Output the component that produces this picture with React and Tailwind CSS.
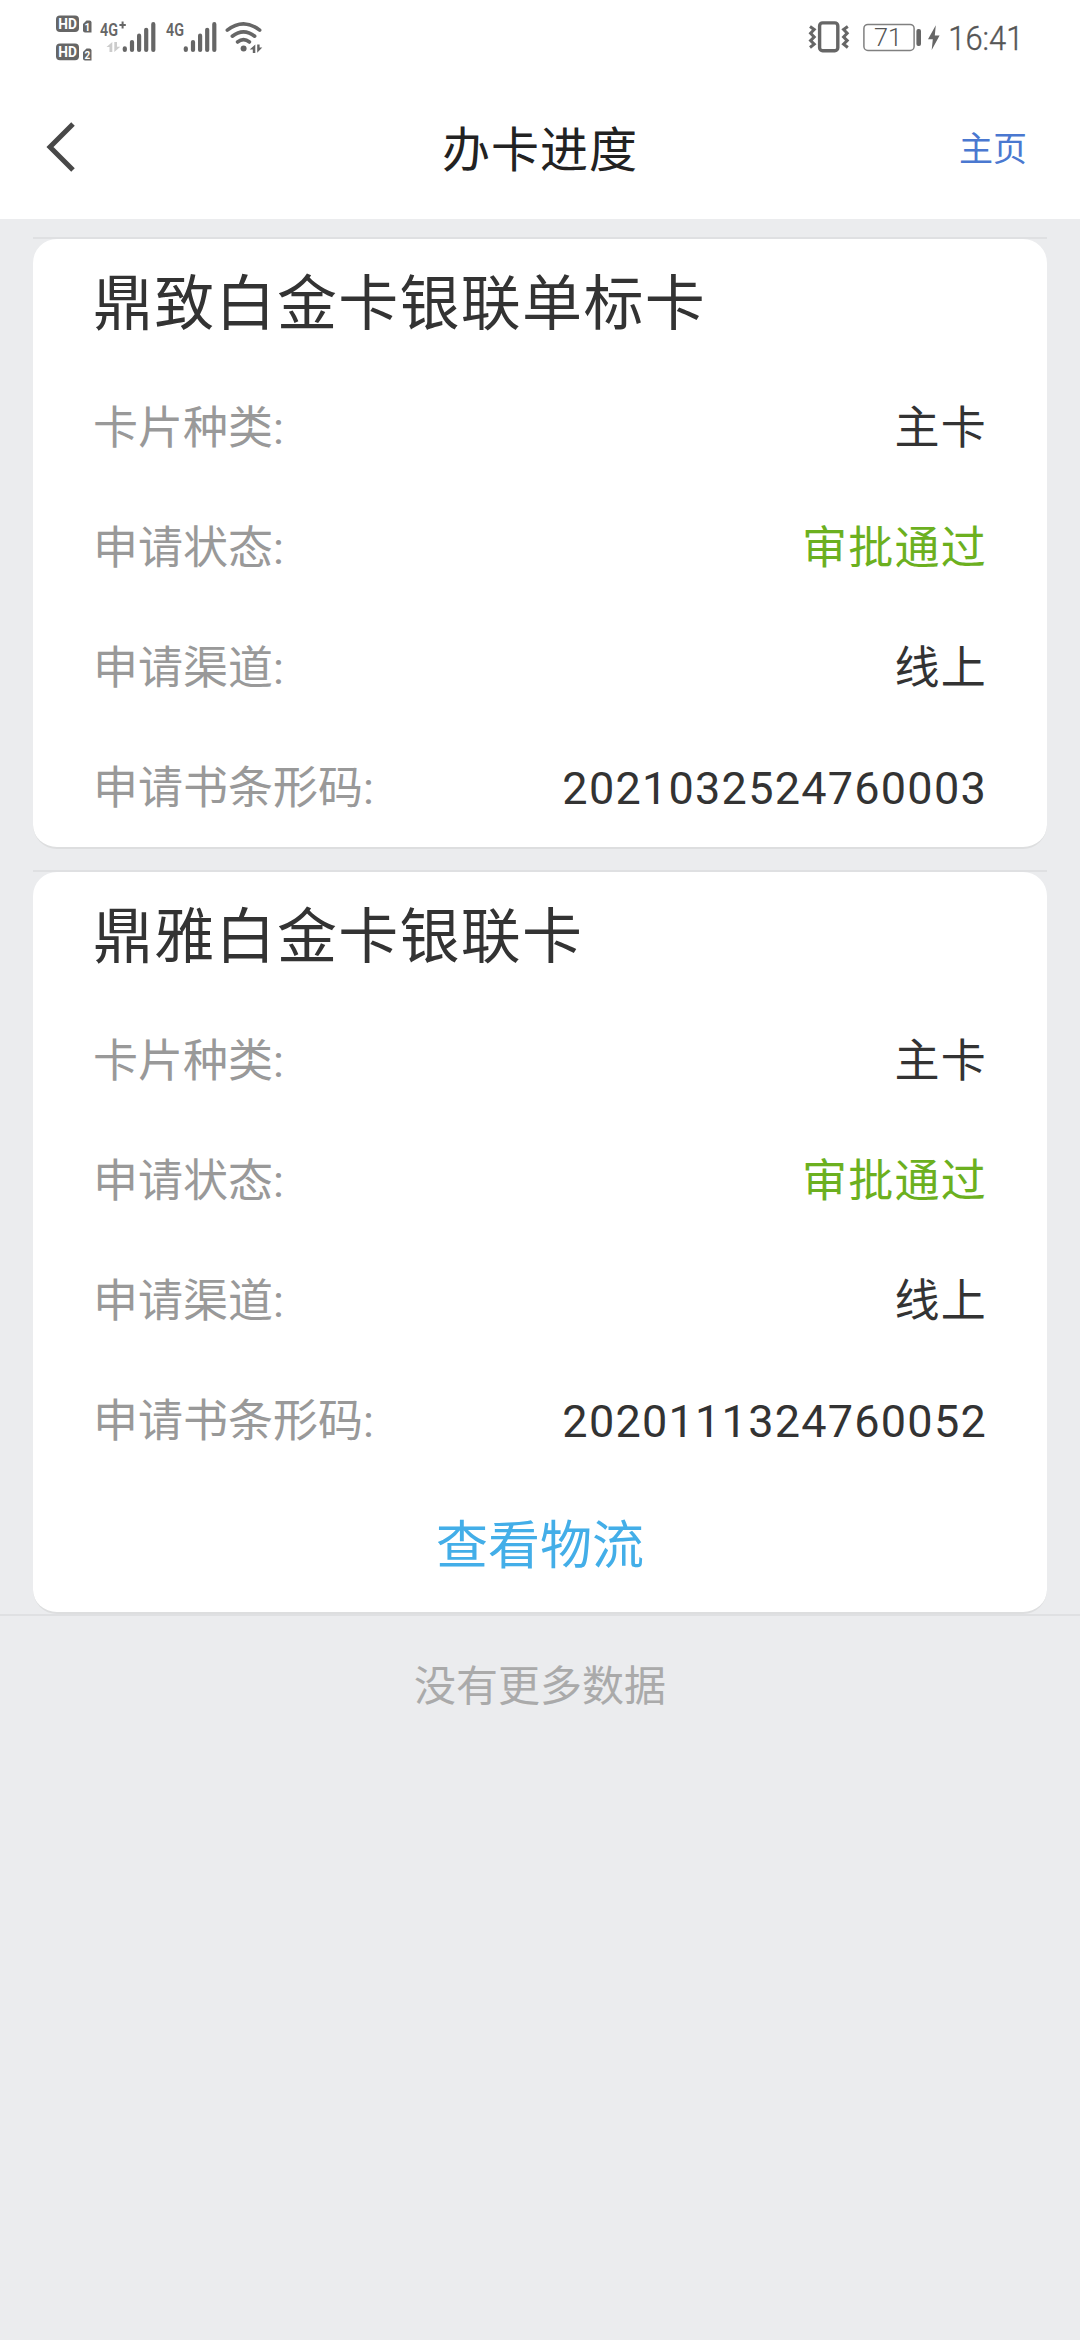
import React from 'react';

const cards = [
  {
    title: '鼎致白金卡银联单标卡',
    type: '主卡',
    status: '审批通过',
    channel: '线上',
    barcode: '2021032524760003',
  },
  {
    title: '鼎雅白金卡银联卡',
    type: '主卡',
    status: '审批通过',
    channel: '线上',
    barcode: '2020111324760052',
    tracking: true,
  },
];

const HdBadge = ({ y, sim }) => (
  <g transform={`translate(0 ${y})`}>
    <rect x="56" y="0" width="23" height="16.6" rx="4" fill="#666" />
    <text x="58.3" y="13.6" fontSize="15" fontWeight="700" fill="#fff" textLength="18.6" lengthAdjust="spacingAndGlyphs">HD</text>
    <path d="M83 8.5L86.5 5H89.5Q91.5 5 91.5 7V17H85Q83 17 83 15Z" fill="#666" />
    <text x="84.6" y="15" fontSize="10" fontWeight="700" fill="#fff">{sim}</text>
  </g>
);

const SignalBars = ({ x }) => (
  <g stroke="#666" strokeWidth="4.2" strokeLinecap="round">
    <path d={`M${x} 48.3V49.9 M${x + 7.2} 42V49.9 M${x + 14.3} 35.7V49.9 M${x + 21.4} 29.8V49.9 M${x + 28.5} 24.2V49.9`} />
  </g>
);

const StatusLeft = () => (
  <svg width="280" height="76" viewBox="0 0 280 76" fontFamily="Roboto, sans-serif">
    <HdBadge y={15.5} sim="1" />
    <HdBadge y={43.6} sim="2" />
    <text x="100" y="35.5" fontSize="18.5" fontWeight="600" fill="#666" textLength="18" lengthAdjust="spacingAndGlyphs">4G</text>
    <path d="M119.4 25H125.8 M122.6 21.6V28.4" stroke="#666" strokeWidth="2" />
    <path d="M106.5 47L112.3 42V52H109.5V47Z M114.3 42H117V46.8H120.3L114.3 52Z" fill="#ccc" />
    <SignalBars x={124.8} />
    <text x="166" y="35.5" fontSize="18.5" fontWeight="600" fill="#666" textLength="18" lengthAdjust="spacingAndGlyphs">4G</text>
    <SignalBars x={185.8} />
    <g fill="none" stroke="#666" strokeWidth="3.6" strokeLinecap="round">
      <path d="M227.3 30.2Q243.5 17.6 259.7 30.2" />
      <path d="M232.3 36.2Q243.5 27.6 254.7 36.2" />
      <path d="M237.5 42Q243.5 37.4 249.5 42" />
    </g>
    <circle cx="243.6" cy="48.6" r="3" fill="#666" />
    <path d="M249.7 49.4L255.3 44.4V53H252.8V49.4Z M257.2 44.4H259.6V47.4H262.3L257.2 52.8Z" fill="#666" />
  </svg>
);

const StatusRight = () => (
  <svg width="226" height="76" viewBox="804 0 226 76" fontFamily="Roboto, sans-serif">
    <g fill="none" stroke="#666">
      <rect x="819.6" y="22.9" width="18.2" height="27.8" rx="3" strokeWidth="3.4" />
      <path d="M810 26.5L814.2 29.5L810.6 33.3L814.2 37L810.6 40.6L814.2 44.2L810 47.5" strokeWidth="3" />
      <path d="M847.8 26.5L843.6 29.5L847.2 33.3L843.6 37L847.2 40.6L843.6 44.2L847.8 47.5" strokeWidth="3" />
      <rect x="863.9" y="24.4" width="50.2" height="26" rx="4" stroke="#808080" strokeWidth="1.5" />
    </g>
    <rect x="916.4" y="29" width="4.6" height="17" rx="2" fill="#666" />
    <text x="874" y="46.2" fontSize="26.5" fontWeight="300" fill="#555" textLength="28" lengthAdjust="spacingAndGlyphs">71</text>
    <path d="M935.8 25.3L928 39.2H932.8L931.7 50L939.6 35.6H934.8Z" fill="#666" />
    <text x="948.3" y="50" fontSize="33.5" fontWeight="300" fill="#555" stroke="#555" strokeWidth="0.4" textLength="75" lengthAdjust="spacingAndGlyphs">16:41</text>
  </svg>
);

const Row = ({ label, value, valueClass = 'text-[#333]' }) => (
  <div className="flex h-[120px] items-center justify-between text-[45px]">
    <span className="text-[#999]">{label}:</span>
    <span className={`tracking-[1.25px] ${valueClass}`}>{value}</span>
  </div>
);

const Card = ({ card }) => (
  <div>
    <div className="h-[2px] bg-[#dfe0e2]" />
    <div className="rounded-[24px] border-b-2 border-[#dddedf] bg-white px-[60px]">
      <h2 className="h-[130px] pt-px text-[60px] leading-[130px] tracking-[1.3px] text-[#333]">{card.title}</h2>
      <Row label="卡片种类" value={card.type} />
      <Row label="申请状态" value={card.status} valueClass="text-[#6cb01f]" />
      <Row label="申请渠道" value={card.channel} />
      <Row label="申请书条形码" value={card.barcode} />
      {card.tracking ? (
        <button className="block h-[130px] w-full text-center text-[52px] text-[#43aee8]">查看物流</button>
      ) : (
        <div className="-mt-[2px]" />
      )}
    </div>
  </div>
);

const App = () => {
  return (
    <div className="h-[2340px] w-[1080px] overflow-hidden bg-[#ebecee] font-[Roboto,'Noto_Sans_CJK_SC',sans-serif]">
      <div className="flex h-[76px] items-center justify-between bg-white pr-[50px]">
        <StatusLeft />
        <StatusRight />
      </div>

      <header className="grid h-[143px] grid-cols-3 items-center bg-white pl-[46px] pr-[53px]">
        <svg className="-mt-[2px]" width="32" height="52" viewBox="0 0 32 52" fill="none" stroke="#484848" strokeWidth="5">
          <path d="M27 3L4 26L27 49" />
        </svg>
        <h1 className="pl-[7px] pt-[6px] text-center text-[48px] tracking-[0.02em] text-[#222]">办卡进度</h1>
        <a href="#" className="pt-[3px] text-right text-[34px] text-[#4a78d0]">主页</a>
      </header>

      <main className="flex flex-col gap-[21px] px-[33px] pt-[18px]">
        {cards.map((card) => (
          <Card key={card.barcode} card={card} />
        ))}
      </main>
      <div className="h-[2px] bg-[#dfe0e2]" />
      <p className="pt-[39px] text-center text-[42px] text-[#aaa]">没有更多数据</p>
    </div>
  );
};

export default App;
